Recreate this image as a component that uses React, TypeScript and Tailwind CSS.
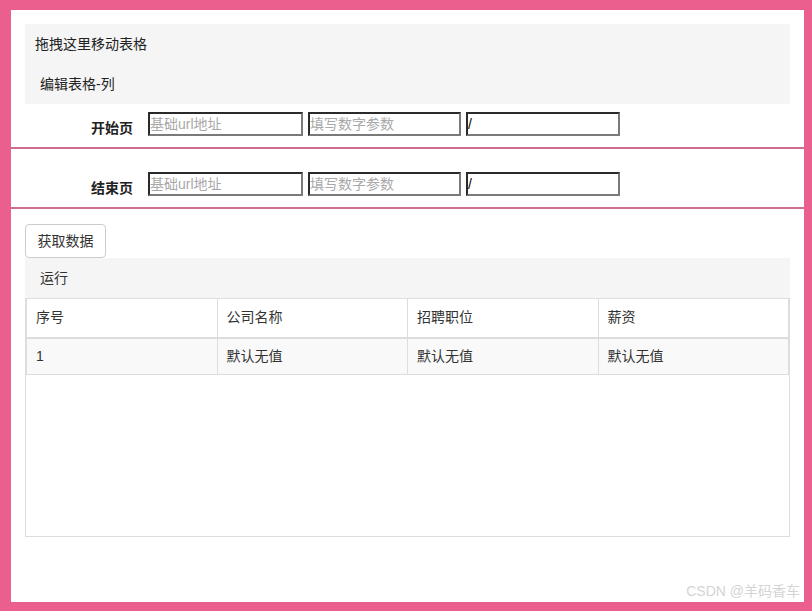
import React from "react";

const font = { fontFamily: "'Liberation Sans','Noto Sans CJK SC',sans-serif" };

function Inp({ w, ph, val }: { w: string; ph?: string; val?: string }) {
  return (
    <input
      readOnly
      placeholder={ph}
      defaultValue={val}
      className={`${w} h-[24px] border-2 border-t-[#2a2a2a] border-l-[#2a2a2a] border-b-[#7a7a7a] border-r-[#7a7a7a] bg-white px-0 text-[14px] leading-[20px] text-black placeholder:text-[#a9a9a9] outline-none`}
    />
  );
}

export default function App() {
  const cols = ["序号", "公司名称", "招聘职位", "薪资"];
  const row = ["1", "默认无值", "默认无值", "默认无值"];
  return (
    <div className="w-[812px] h-[611px] bg-[#ea5f8e] pt-[10px] pl-[11px] pr-[8px] pb-[9px]" style={font}>
      <div className="relative h-[592px] bg-white text-[14px] text-[#333]">
        <div className="pt-[14px] px-[14px]">
          <div className="h-[80px] bg-[#f5f5f5] flex flex-col">
            <div className="h-[40px] pl-[10px] flex items-center text-[#222]">拖拽这里移动表格</div>
            <div className="h-[40px] pl-[15px] flex items-center text-[#222]">编辑表格-列</div>
          </div>
        </div>
        <div className="h-[43px] pt-[8px] flex">
          <div className="w-[122px] text-right font-bold text-[#222] pt-[6px]">开始页</div>
          <div className="ml-[15px] flex gap-[5px]">
            <Inp w="w-[155px]" ph="基础url地址" />
            <Inp w="w-[153px]" ph="填写数字参数" />
            <Inp w="w-[154px]" val="/" />
          </div>
        </div>
        <div className="h-[2px] bg-[#cc6f92]" />
        <div className="h-[58px] pt-[23px] flex">
          <div className="w-[122px] text-right font-bold text-[#222] pt-[6px]">结束页</div>
          <div className="ml-[15px] flex gap-[5px]">
            <Inp w="w-[155px]" ph="基础url地址" />
            <Inp w="w-[153px]" ph="填写数字参数" />
            <Inp w="w-[154px]" val="/" />
          </div>
        </div>
        <div className="h-[2px] bg-[#cc6f92]" />
        <div className="px-[14px] pt-[15px]">
          <button className="block w-[81px] h-[34px] border border-[#ccc] rounded-[4px] bg-white text-[14px] text-[#333]">获取数据</button>
          <div className="h-[40px] bg-[#f5f5f5] pl-[15px] flex items-center text-[#333]">运行</div>
          <div className="h-[239px] border border-[#ddd] border-t-0">
            <table className="w-full border-collapse table-fixed">
              <thead>
                <tr className="h-[39px]">
                  {cols.map((c) => (
                    <th key={c} className="border border-[#ddd] border-b-2 text-left font-normal pl-[9px] text-[#333]">{c}</th>
                  ))}
                </tr>
              </thead>
              <tbody>
                <tr className="h-[37px] bg-[#f9f9f9]">
                  {row.map((c, i) => (
                    <td key={i} className="border border-[#ddd] pl-[9px] text-[#333]">{c}</td>
                  ))}
                </tr>
              </tbody>
            </table>
          </div>
        </div>
        <div className="absolute right-[4px] bottom-[0px] text-[14px] font-normal text-[#d4d4d4]">CSDN @羊码香车</div>
      </div>
    </div>
  );
}
